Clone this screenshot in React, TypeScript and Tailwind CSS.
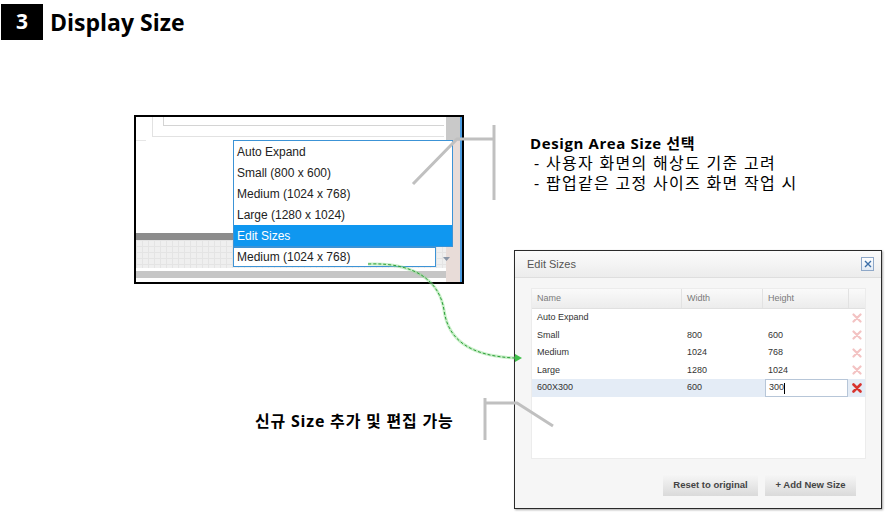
import React from "react"

const ui = "font-['Liberation_Sans',Arial,sans-serif]"
const doc = "font-['Open_Sans','Noto_Sans_CJK_KR',sans-serif]"

const sizes = [
  { name: "Auto Expand", width: "", height: "" },
  { name: "Small", width: "800", height: "600" },
  { name: "Medium", width: "1024", height: "768" },
  { name: "Large", width: "1280", height: "1024" },
]

const options = ["Auto Expand", "Small (800 x 600)", "Medium (1024 x 768)", "Large (1280 x 1024)"]

function XMark({ active }: { active?: boolean }) {
  return (
    <svg width="10" height="10" viewBox="0 0 10 10">
      <path
        d="M1.5 1.5 L8.5 8.5 M8.5 1.5 L1.5 8.5"
        stroke={active ? "#d8342f" : "#f3c3c3"}
        strokeWidth={active ? 2.6 : 2.2}
        strokeLinecap="round"
      />
    </svg>
  )
}

function DesignerShot() {
  return (
    <div className={`absolute left-[134px] top-[115px] w-[330px] h-[169px] border-2 border-black bg-white flex ${ui}`}>
      {/* canvas area */}
      <div className="flex-1 flex flex-col">
        <div className="flex-1 relative">
          <div className="ml-[16px] mr-[2px] h-[20px] border-l border-b border-[#e2e2e2] pl-[10px]">
            <div className="h-[9px] border-l border-b border-[#d4d4d4]" />
          </div>
          <div className="mt-[3px] w-[10px] border-t border-[#e6e6e6]" />
        </div>
        <div className="h-[7px] bg-[#8c8c8c]" />
        <div className="h-[28px] bg-[#efefef] bg-[linear-gradient(#e4e4e4_1px,transparent_1px),linear-gradient(90deg,#e4e4e4_1px,transparent_1px)] bg-[size:6px_6px]" />
        <div className="h-[3px] bg-white" />
        <div className="h-[7px] bg-[#c6c6c6]" />
        <div className="h-[4px] bg-white" />
      </div>
      {/* scrollbar */}
      <div className="w-[16px] flex">
        <div className="flex-1 flex flex-col bg-[#e8dcd8]">
          <div className="h-[24px] bg-[#c9c9c9]" />
        </div>
        <div className="w-[2px] bg-[#4a9be0]" />
      </div>

      {/* open dropdown */}
      <div className="absolute left-[97px] top-[23px] w-[220px] border border-[#3c93d6] bg-white text-[12px] text-[#222]">
        {options.map((o) => (
          <div key={o} className="h-[21px] flex items-center px-[3px]">
            {o}
          </div>
        ))}
        <div className="h-[21px] flex items-center px-[3px] bg-[#0f97f0] text-white">Edit Sizes</div>
      </div>
      <div className="absolute left-[97px] top-[130px] w-[203px] h-[20px] border border-[#3c93d6] bg-white text-[12px] text-[#222] flex items-center px-[3px]">
        Medium (1024 x 768)
      </div>
      <div className="absolute left-[303px] top-[137px] w-[14px] h-[10px] flex items-center justify-center">
        <svg width="7" height="4" viewBox="0 0 7 4">
          <path d="M0 0 L7 0 L3.5 4 Z" fill="#8a96a6" />
        </svg>
      </div>
    </div>
  )
}

function EditSizesDialog() {
  return (
    <div className={`absolute left-[514px] top-[250px] w-[368px] h-[259px] border border-[#2a2a2a] bg-[#f6f6f6] shadow-[1px_1px_2px_rgba(0,0,0,0.35)] flex flex-col ${ui}`}>
      <div className="h-[27px] shrink-0 flex items-center justify-between pl-[12px] pr-[7px] bg-[linear-gradient(#fbfbfb,#ececec)] border-b border-[#dedede]">
        <span className="text-[11px] text-[#555]">Edit Sizes</span>
        <div className="w-[13px] h-[14px] border border-[#8fa8c8] bg-[linear-gradient(#ffffff,#e2eaf4)] flex items-center justify-center">
          <svg width="8" height="8" viewBox="0 0 8 8">
            <path d="M1 1 L7 7 M7 1 L1 7" stroke="#3b6ea8" strokeWidth="1.4" />
          </svg>
        </div>
      </div>

      <div className="mt-[10px] ml-[16px] w-[335px] h-[171px] bg-white border border-[#ececec] text-[9px]">
        <div className="grid grid-cols-[150px_81px_86px_16px] h-[20px] bg-[linear-gradient(#fafafa,#ececec)] border-b border-[#e0e0e0] text-[#7a7a7a]">
          <div className="flex items-center pl-[5px] border-r border-[#e2e2e2]">Name</div>
          <div className="flex items-center pl-[5px] border-r border-[#e2e2e2]">Width</div>
          <div className="flex items-center pl-[5px] border-r border-[#e2e2e2]">Height</div>
          <div />
        </div>
        {sizes.map((s) => (
          <div key={s.name} className="grid grid-cols-[150px_81px_86px_16px] h-[17.5px] text-[#333]">
            <div className="flex items-center pl-[5px]">{s.name}</div>
            <div className="flex items-center pl-[5px]">{s.width}</div>
            <div className="flex items-center pl-[5px]">{s.height}</div>
            <div className="flex items-center justify-center">
              <XMark />
            </div>
          </div>
        ))}
        <div className="grid grid-cols-[150px_81px_86px_16px] h-[18px] bg-[#e4ecf6] text-[#333]">
          <div className="flex items-center pl-[5px]">600X300</div>
          <div className="flex items-center pl-[5px]">600</div>
          <div className="flex items-center pl-[2px] pr-[1px]">
            <div className="w-full h-[18px] bg-white border border-[#b7c6d8] flex items-center pl-[3px]">
              300<span className="w-px h-[11px] bg-black" />
            </div>
          </div>
          <div className="flex items-center justify-center">
            <XMark active />
          </div>
        </div>
      </div>

      <div className="flex justify-end gap-[7px] mt-[15px] pr-[25px]">
        <button className="w-[95px] h-[22px] bg-[linear-gradient(#f7f7f7,#dadada)] text-[9.5px] font-bold text-[#444]">
          Reset to original
        </button>
        <button className="w-[91px] h-[22px] bg-[linear-gradient(#f7f7f7,#dadada)] text-[9.5px] font-bold text-[#444]">
          + Add New Size
        </button>
      </div>
    </div>
  )
}

export default function App() {
  return (
    <div className="relative w-[888px] h-[517px] bg-white overflow-hidden">
      {/* slide title */}
      <div className={`flex items-center gap-[7px] pt-[4px] pl-[1px] ${doc}`}>
        <div className="w-[42px] h-[36px] bg-black text-white text-[21px] font-bold flex items-center justify-center">3</div>
        <div className="text-[23px] font-bold text-black leading-none">Display Size</div>
      </div>

      <DesignerShot />

      {/* note 1 */}
      <div className={`absolute left-[530px] top-[133px] leading-[20px] text-black ${doc}`}>
        <div className="font-bold text-[15px] tracking-[0.6px]">Design Area Size 선택</div>
        <div className="pl-[4px] text-[16px] tracking-[1.3px]">- 사용자 화면의 해상도 기준 고려</div>
        <div className="pl-[4px] text-[16px] tracking-[1.3px]">- 팝업같은 고정 사이즈 화면 작업 시</div>
      </div>

      <EditSizesDialog />

      {/* note 2 */}
      <div className={`absolute left-[255px] top-[409px] text-[16px] tracking-[0.8px] font-bold text-black ${doc}`}>
        신규 Size 추가 및 편집 가능
      </div>

      {/* callout lines + flow arrow */}
      <svg className="absolute inset-0 pointer-events-none" width="888" height="517">
        <g stroke="#c0c0c0" strokeWidth="3" fill="none">
          <path d="M494 125 L494 200" />
          <path d="M413 184 L457 139 L494 139" />
          <path d="M485 398 L485 440" />
          <path d="M485 403 L517 403 L553 426" />
        </g>
        <path
          d="M368 264 C420 262 440 285 444 310 C448 340 470 356 515 358"
          stroke="#8fe08f"
          strokeWidth="3"
          fill="none"
          opacity="0.5"
        />
        <path
          d="M368 264 C420 262 440 285 444 310 C448 340 470 356 515 358"
          stroke="#2e9e3a"
          strokeWidth="1"
          strokeDasharray="3 2"
          fill="none"
        />
        <path d="M515 354 L522 358 L515 362 Z" fill="#3fbf4a" />
      </svg>
    </div>
  )
}
